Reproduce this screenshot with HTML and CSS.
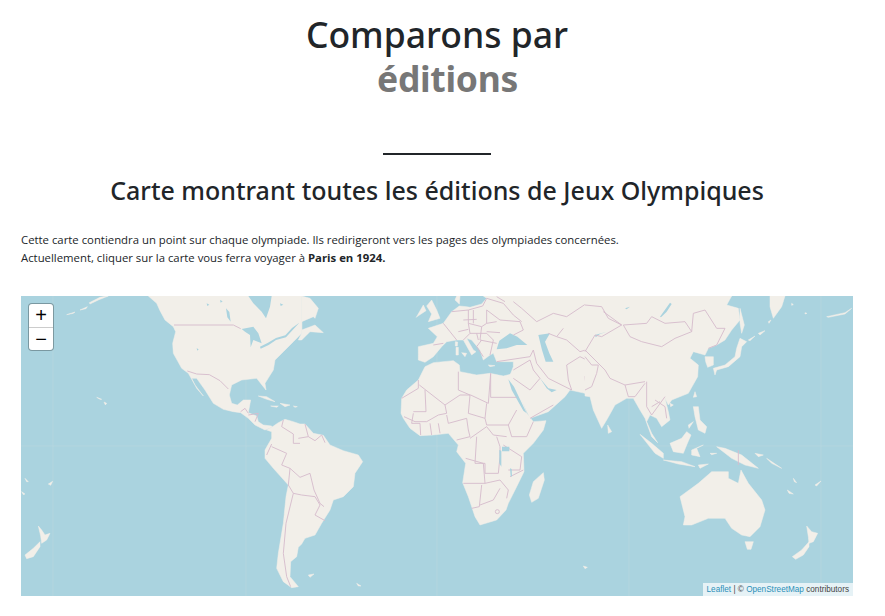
FILE: index.html
```html
<!DOCTYPE html>
<html lang="fr">
<head>
<meta charset="utf-8">
<title>Comparons par éditions</title>
<link rel="stylesheet" href="styles.css">
</head>
<body>
<main class="page">
  <h1 class="title">Comparons par<span class="title-accent">éditions</span></h1>
  <div class="rule"></div>
  <h2 class="subtitle">Carte montrant toutes les éditions de Jeux Olympiques</h2>
  <p class="intro">Cette carte contiendra un point sur chaque olympiade. Ils redirigeront vers les pages des olympiades concernées.<br>Actuellement, cliquer sur la carte vous ferra voyager à <strong>Paris en 1924.</strong></p>
  <section class="map">
    <svg class="map-art" viewBox="63 18 2496 900" aria-hidden="true">
      <g class="seams">
        <path d="M159 18V918M738 18V918M1311 18V918M1887 18V918M2463 18V918M63 468H2559"/>
      </g>
      <g>
        <!-- Americas -->
        <path class="land" d="M445 18L470 40 480 62 495 90 520 110 527 125 518 160 520 190 545 235 565 250 585 285 610 318 590 295 575 265 590 265 615 300 640 340 670 358 700 365 722 368 745 385 765 405 795 420 815 412 815 408 790 405 775 395 770 378 745 368 752 330 730 330 712 345 695 340 688 315 695 285 725 270 770 265 790 290 798 300 795 280 820 240 825 210 850 185 880 155 905 130 905 18Z"/>
        <path class="land" d="M905 18L930 25 955 55 945 85 940 80 905 95 905 120 945 105 970 128 930 125 905 150 895 150 905 130Z"/>
        <path class="land" d="M800 420L815 412 835 398 855 388 880 395 900 402 915 402 940 430 970 436 990 465 1030 482 1075 495 1088 515 1065 550 1060 590 1030 620 1000 630 990 660 965 700 945 735 915 745 905 762 895 772 890 800 872 815 870 860 895 890 875 893 850 875 830 835 835 790 850 700 858 620 865 585 820 535 795 505 795 480 815 445 815 425Z"/>
        <path class="land" d="M775 318L800 320 825 335 800 328ZM812 348L835 348 830 352ZM840 340L870 345 855 350ZM880 348L892 350 885 352Z"/>
        <path class="water" d="M745 18L815 18 810 50 798 85 785 65 760 40ZM898 98L880 118 858 142 828 150 806 165 782 176 780 170 804 158 828 144 856 136 876 114ZM725 117L760 110 775 130 785 160 760 150 752 172 750 135 735 125ZM678 55L688 66 692 95 682 82ZM590 175L596 178 592 182ZM620 40L628 44 622 48ZM660 30L668 34 662 38ZM840 40L850 44 842 48Z"/>
        <path class="border" d="M522 105H700L722 116M562 243L590 252 628 254 660 272 685 297M722 365L735 355 745 370M745 375L775 370 765 395M850 390L845 410 880 432 880 460 900 460M815 462L800 495M815 470L860 490M860 490L845 525 870 535 865 585 880 610 858 700 850 790 860 860 872 890M870 535L900 562 930 550 942 600 960 640 972 650M880 610L905 615 945 620 960 645 945 675 975 692M915 402L925 440 945 452 965 435 975 458M895 445L925 440"/>
        <!-- Pacific, left side -->
        <path class="land" d="M325 18L295 30 270 42 268 38 300 22 320 18ZM240 60L262 50 258 56ZM200 74L225 66 220 70ZM312 336L320 340 316 345ZM290 322L305 328 300 328ZM145 582L158 574 152 586ZM65 605L75 612 70 614ZM75 565L85 575 80 575Z"/>
        <path class="land" d="M115 708L125 720 135 735 150 730 140 750 125 760 122 738ZM120 755L100 775 75 795 80 806 100 800 120 770Z"/>
      </g>
      <g transform="translate(900 0)">
        <!-- Africa -->
        <path class="land" d="M305 325L320 300 355 270 375 230 400 218 460 212 478 225 480 245 530 255 570 250 610 258 635 252 650 290 680 370 700 395 738 392 730 420 700 460 670 490 672 545 650 590 625 640 618 660 590 690 540 705 525 680 505 620 488 578 497 520 470 485 475 465 445 430 400 435 360 437 330 415 310 385 303 370Z"/>
        <path class="land" d="M730 548L733 570 715 625 695 637 688 615 700 575ZM25 855L42 852 30 862ZM170 880L183 888 175 888ZM850 828L862 832 855 836Z"/>
        <!-- Europe and west Asia -->
        <path class="land" d="M375 217L355 210 355 170 400 160 412 140 385 115 430 100 455 65 478 48 500 50 510 52 545 42 560 25 550 18 862 18 862 318 855 310 810 300 795 320 745 365 690 385 645 290 625 268 640 230 640 215 590 215 580 190 570 195 550 210 540 180 515 150 500 145 520 180 528 185 515 195 490 150 470 150 440 155 425 170 400 200Z"/>
        <path class="land" d="M470 18L480 18 478 42 465 30ZM350 80L370 45 378 62 348 82ZM395 30L410 60 420 85 385 95 395 72 380 48ZM466 155L473 156 472 168 466 168ZM468 172L475 172 475 195 468 195ZM485 188L500 190 495 200ZM565 225L585 227 570 230Z"/>
        <path class="water" d="M590 178L598 152 630 130 652 140 682 165 650 165 620 175ZM715 135L750 130 735 155 748 190 760 215 737 215 726 180ZM625 268L642 290 680 370 670 362 635 300ZM720 265L745 295 770 300 755 307 740 295Z"/>
        <path class="border" d="M358 285L435 345 480 315 512 315 565 340 572 250V322H650M375 300L378 365 340 365M355 270V295L305 325M475 245V300L510 315M435 345L440 370 415 375 380 395 345 395 312 380M505 370L510 315M500 385L505 420 510 440 470 450M555 385L560 340M555 385L505 370M555 385L560 405 625 405 650 360M625 405L635 440 680 440 700 395M510 445L560 410 580 435 620 440M530 440L525 520H555V550H595L600 500 600 470 590 440M497 505L550 520 555 580H490M545 585L538 650 515 655M540 645L580 630 600 595M610 465L665 500 660 540 625 540M630 560L670 540M555 580L600 570 625 600 620 625M340 370L335 400 360 400 362 435M390 400L395 435M415 400L420 430M440 375L445 400 500 385"/>
        <path class="border" d="M640 265L690 300 720 265M690 385L760 345M640 240L690 210 700 240 720 265M700 180L710 220 745 265 815 300M800 225L805 270 815 300M745 130L770 140 800 150 840 185 890 170M710 95L760 70 800 80 860 40M800 225L840 200 880 220M860 310L855 260 880 225M770 140L790 115M430 100L450 125 470 150M455 65L505 60 505 100 545 110 560 100 590 95M505 100L510 130 490 150M545 110L540 150 590 160M560 100L560 60 600 90 660 95 670 120 640 135M505 60L548 48 560 25 610 40 640 75 665 95M510 130H560L580 150M545 150L530 170 550 200M580 150L570 195M590 215L690 200 700 180M615 35L590 20M640 35L665 55 710 95M490 90L530 88M520 60V100M475 125L505 118M530 130L535 150M560 125L600 128M400 165L430 160"/>
        <path class="water" d="M606 470H628V484H606ZM598 480L604 482 604 530 598 520ZM630 535L635 537 636 560 632 558Z"/>
        <circle class="border" cx="592" cy="665" r="6"/>
      </g>
      <g transform="translate(1755 0)">
        <!-- East Asia -->
        <path class="land" d="M0 18H440L425 45 460 55 465 90 440 120 420 150 395 165 370 175 360 195 325 185 315 205 340 225 338 260 310 310 260 330 250 345 240 325 250 365 255 390 230 410 215 385 195 375 185 395 200 430 218 458 200 440 180 385 165 360 145 325 125 325 90 345 68 385 50 415 25 360 15 320 0 318Z"/>
        <path class="land" d="M465 55L478 105 470 130 465 100ZM555 18H600L590 50 565 85 555 50ZM465 145L485 155 470 170 465 200 430 230 395 240 390 255 385 235 420 225 450 200 455 175ZM360 200L385 200 385 225 368 232 362 215ZM330 305L335 320 325 322ZM255 340L265 345 257 350ZM325 350L340 350 345 390 365 410 360 430 340 420 330 380ZM68 405L80 425 70 430ZM310 405L325 395 312 415ZM550 95L558 90 552 100ZM520 130L540 122 525 135ZM490 150L510 138 495 152ZM725 80L780 68 800 55 780 72 730 82ZM620 40L625 44 620 46ZM660 68L666 70 660 72Z"/>
        <path class="land" d="M165 433L200 460 235 490 235 505 210 490ZM235 510L290 515 330 530 280 522ZM255 460L290 445 305 425 318 435 305 465 295 490 265 485ZM320 480L355 465 335 475 345 500 320 495ZM395 470L420 475 470 495 520 535 480 525 440 505ZM340 525L370 522 345 535ZM375 490L395 490 380 494ZM545 505L590 535 560 520ZM510 490L535 495 520 500ZM607 600L625 612 612 610ZM690 585L708 573 695 588ZM625 565L635 578 628 575Z"/>
        <path class="land" d="M285 620L340 580 380 545 430 545 430 565 460 580 468 540 490 580 530 630 540 660 525 710 495 740 470 735 440 715 420 685 370 685 320 705 295 705 300 680ZM480 755L505 755 498 778 487 778ZM665 708L680 725 698 730 685 755 672 760 670 740ZM672 755L650 780 622 800 632 808 655 795 672 770Z"/>
        <path class="water" d="M225 80L255 38 260 42 245 65 228 82ZM30 135L65 125 45 132 32 142ZM120 55L135 50 125 58Z"/>
        <path class="border" d="M115 105L185 100 200 80 240 100 300 95 320 125 270 145 230 170 170 155 135 140ZM320 125L325 70 360 60 395 115 420 115 395 165M0 180L30 210 60 240 75 265 120 285 180 275M120 285L130 320 150 320 180 280M185 275L185 350 200 375 240 320M210 330L240 350 245 385M200 350L225 335M55 65L110 105 50 140 30 135 0 185M0 45L50 50 70 85 110 105M0 200L20 225 40 225 35 250 20 290 0 300M370 175L395 165M460 480V525"/>
      </g>
    </svg>
    <div class="zoom">
      <button class="zoom-btn" type="button">+</button>
      <button class="zoom-btn" type="button">−</button>
    </div>
    <div class="credit"><a href="#">Leaflet</a> | © <a href="#">OpenStreetMap</a> contributors</div>
  </section>
</main>
</body>
</html>
```

FILE: styles.css
```css
* { box-sizing: border-box; }
html, body { margin: 0; background: #fff; }
body { font-family: "Open Sans", "Noto Sans", sans-serif; color: #212529; overflow: hidden; }
.page { width: 885px; height: 616px; padding: 12px 32px 20px 21px; }
.title { margin: 0; font-family: "Noto Sans", "Open Sans", sans-serif; font-size: 35.5px; line-height: 44px; font-weight: 500; text-align: center; }
.title-accent { display: block; padding-left: 21px; color: #777; font-weight: 700; letter-spacing: -.3px; }
.rule { width: 108px; height: 2px; margin: 53px auto 0; background: #212529; }
.subtitle { margin: 19px 0 0; font-family: "Noto Sans", "Open Sans", sans-serif; font-size: 25px; line-height: 32px; font-weight: 500; text-align: center; }
.intro { margin: 25px 0 0; font-size: 11.35px; line-height: 18px; }
.intro strong { font-weight: 700; }
.map { position: relative; height: 300px; margin-top: 29px; overflow: hidden; background: #aad3df; }
.map-art { display: block; width: 832px; height: 300px; filter: blur(.5px); }
.land { fill: #f2efe9; stroke: #f2efe9; stroke-width: 1.5; stroke-linejoin: round; }
.water { fill: #aad3df; }
.border { fill: none; stroke: #d6bccc; stroke-width: 2.8; stroke-linejoin: round; }
.seams path { fill: none; stroke: #b9d8df; stroke-width: 2; }
.zoom { position: absolute; top: 8px; left: 8px; width: 24px; height: 46px; display: flex; flex-direction: column; border-radius: 3px; background: #fff; box-shadow: 0 0 0 1px rgba(0, 0, 0, .28); }
.zoom-btn { flex: 1; padding: 0; border: 0; background: none; font: 400 20px/22px "Liberation Sans", sans-serif; color: #000; }
.zoom-btn:first-child { border-bottom: 1px solid #ccc; }
.credit { position: absolute; right: 0; bottom: 0; padding: 0 4px; height: 13px; font: 8.2px/13px "Liberation Sans", sans-serif; color: #444; background: rgba(255, 255, 255, .7); }
.credit a { color: #2b8fb8; text-decoration: none; }
```
